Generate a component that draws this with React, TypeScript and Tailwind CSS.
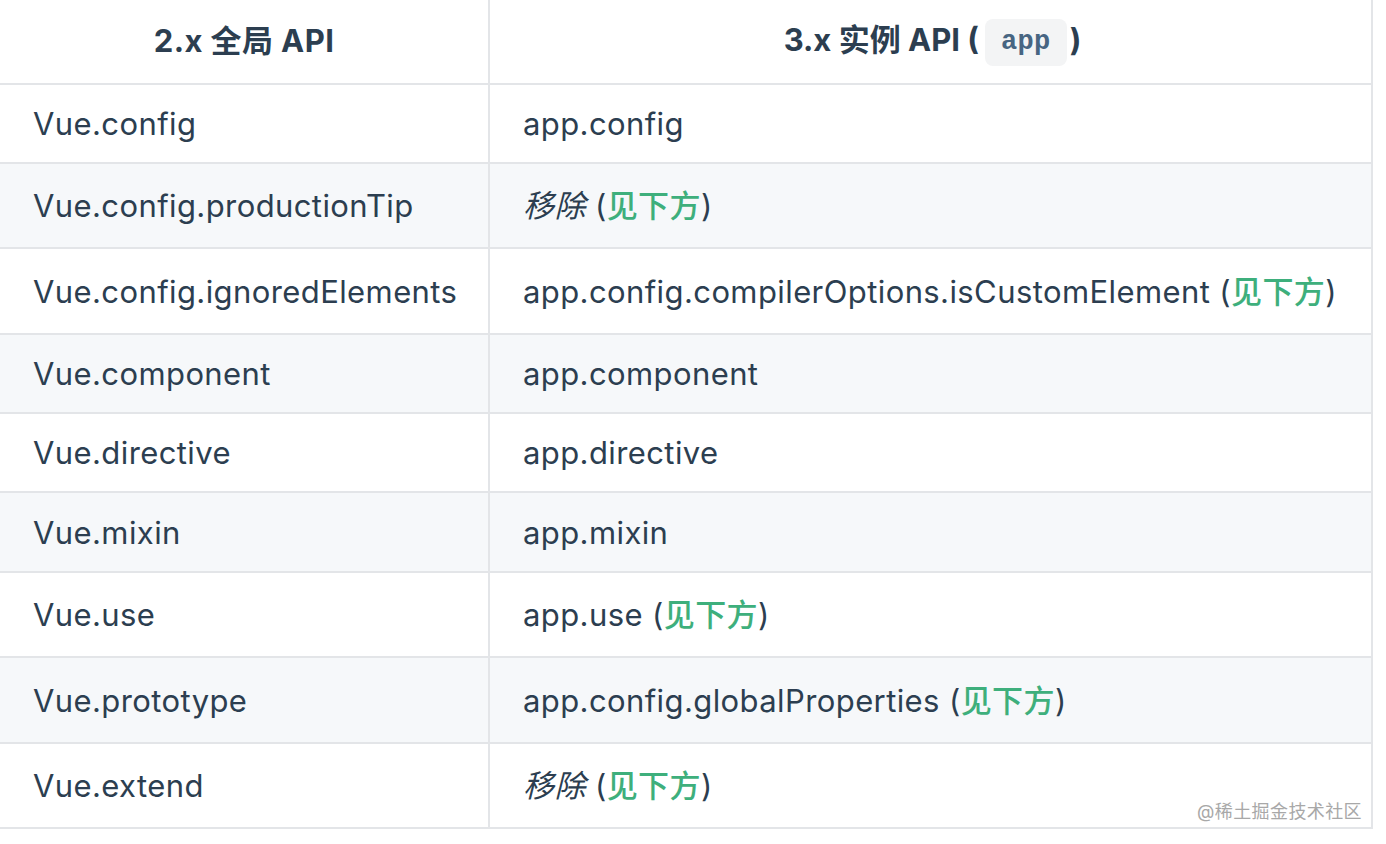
import React from 'react';

type Row = {left: string; right: React.ReactNode; h: string};

const See = () => (
  <>
    {' '}(<span className="font-medium text-[#3eaf7c]">见下方</span>)
  </>
);

const Removed = () => (
  <>
    <em className="italic">移除</em>
    <See />
  </>
);

const rows: Row[] = [
  {left: 'Vue.config', right: 'app.config', h: 'h-[79px]'},
  {left: 'Vue.config.productionTip', right: <Removed />, h: 'h-[85px]'},
  {
    left: 'Vue.config.ignoredElements',
    right: (
      <>
        app.config.compilerOptions.isCustomElement
        <See />
      </>
    ),
    h: 'h-[86px]',
  },
  {left: 'Vue.component', right: 'app.component', h: 'h-[79px]'},
  {left: 'Vue.directive', right: 'app.directive', h: 'h-[79px]'},
  {left: 'Vue.mixin', right: 'app.mixin', h: 'h-[80px]'},
  {
    left: 'Vue.use',
    right: (
      <>
        app.use
        <See />
      </>
    ),
    h: 'h-[85px]',
  },
  {
    left: 'Vue.prototype',
    right: (
      <>
        app.config.globalProperties
        <See />
      </>
    ),
    h: 'h-[86px]',
  },
  {left: 'Vue.extend', right: <Removed />, h: 'h-[85px]'},
];

export default function App() {
  return (
    <div
      className="relative h-[844px] w-[1386px] overflow-hidden bg-white text-[31px] tracking-[0.013em] text-[#2c3e50]"
      style={{fontFamily: 'Inter, "Noto Sans CJK SC", sans-serif'}}>
      <table className="w-[1373px] border-collapse">
        <thead>
          <tr className="h-[84px]">
            <th className="w-[489px] border-2 border-l-0 border-t-0 border-[#e3e5e8] font-bold">
              2.x 全局 API
            </th>
            <th className="border-2 border-t-0 border-[#e3e5e8] font-bold tracking-normal">
              <span className="relative left-[2px]">
                3.x 实例 API (
                <code className="ml-[6px] mr-[3px] inline-block rounded-lg bg-[#f3f4f5] px-[16px] py-[4px] align-middle text-[27px] font-bold leading-[39px] tracking-[0.013em] text-[#476582]">
                  app
                </code>
                )
              </span>
            </th>
          </tr>
        </thead>
        <tbody>
          {rows.map((r, i) => (
            <tr key={r.left} className={`${r.h} ${i % 2 === 1 ? 'bg-[#f6f8fa]' : 'bg-white'}`}>
              <td className="border-2 border-l-0 border-[#e3e5e8] pl-[33px] pt-[2px]">{r.left}</td>
              <td className="whitespace-nowrap border-2 border-[#e3e5e8] pl-[33px] pt-[2px]">{r.right}</td>
            </tr>
          ))}
        </tbody>
      </table>
      <div className="absolute right-[24px] top-[798px] text-[18px] text-[#a8a8a8]">@稀土掘金技术社区</div>
    </div>
  );
}
